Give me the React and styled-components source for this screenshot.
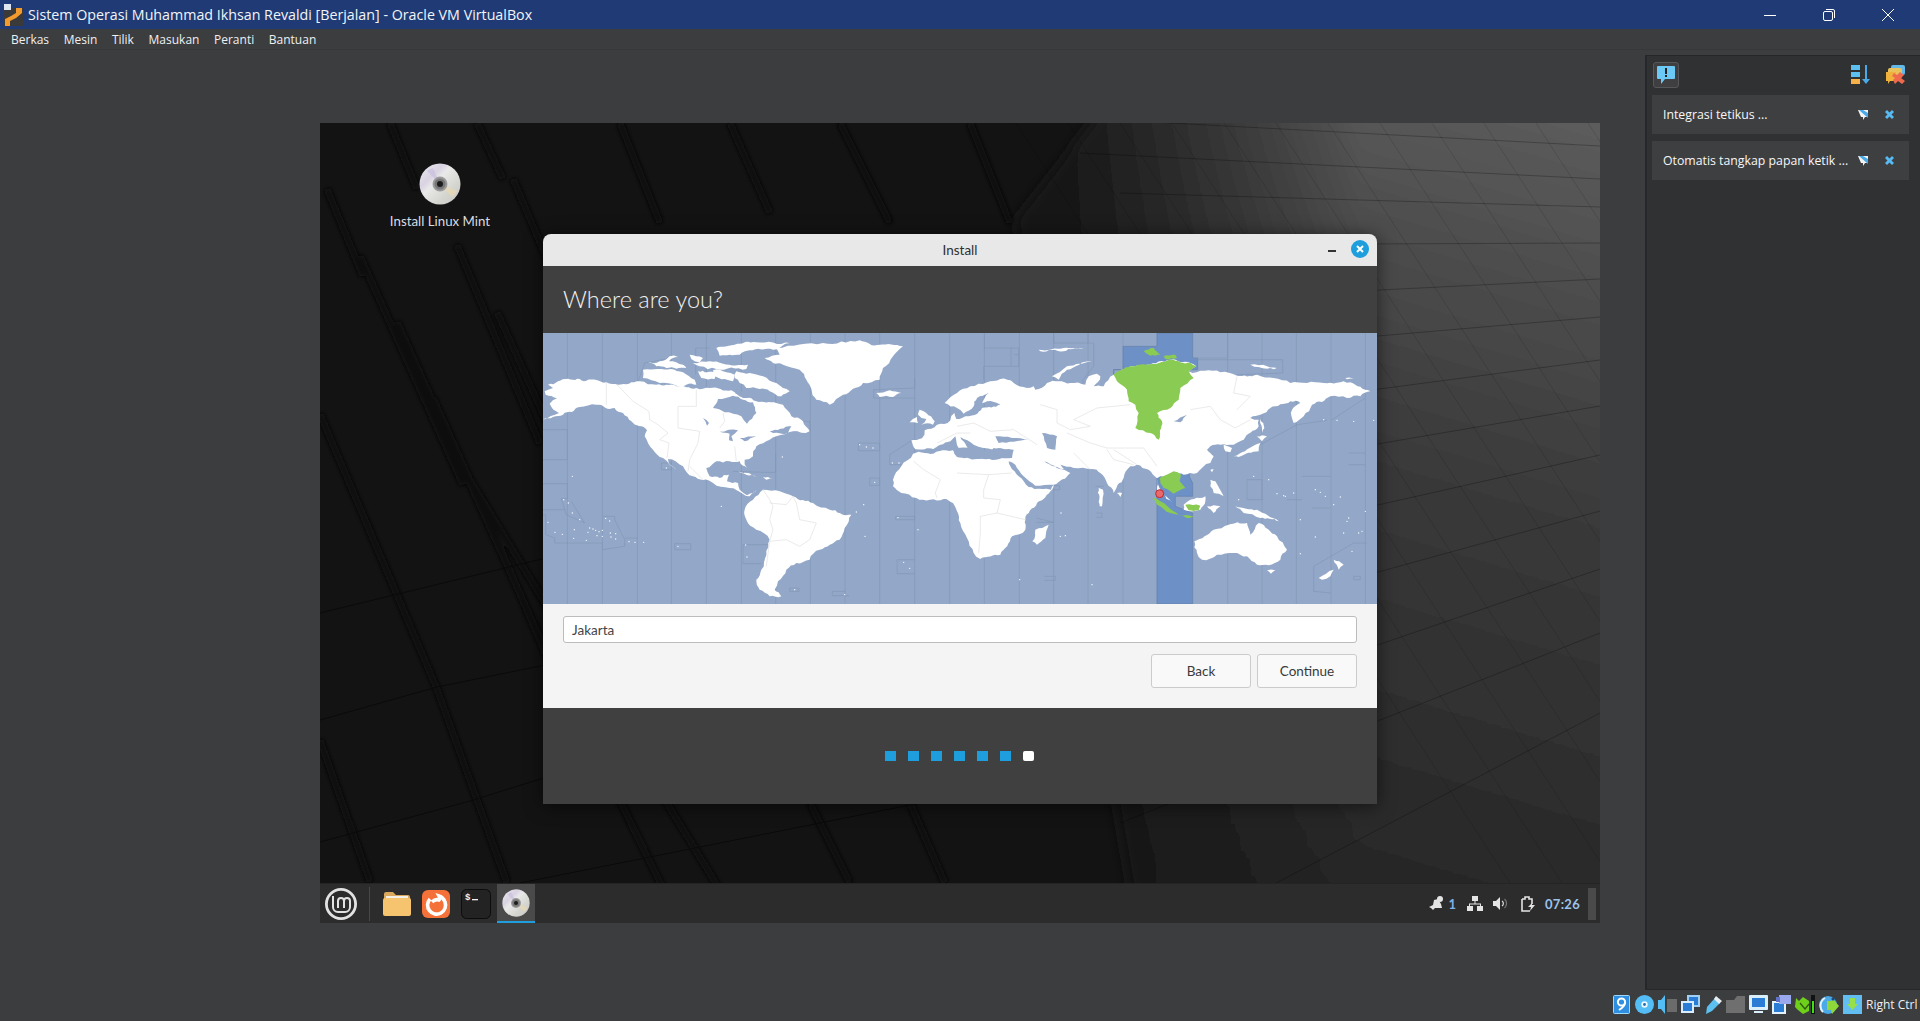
import React from "react";
import styled, { createGlobalStyle } from "styled-components";

const GlobalStyle = createGlobalStyle`
  html, body {
    margin: 0;
    padding: 0;
    background: #3c3d3f;
    overflow: hidden;
  }
  * { box-sizing: border-box; }
`;

const HOST_FONT = `"Open Sans", "Noto Sans", sans-serif`;
const GUEST_FONT = `Lato, "Noto Sans", sans-serif`;

const Window = styled.div`
  width: 1920px;
  height: 1021px;
  display: flex;
  flex-direction: column;
  background: #3c3d3f;
  font-family: ${HOST_FONT};
`;

const TitleBar = styled.header`
  height: 29px;
  flex: none;
  display: flex;
  align-items: center;
  background: #1f3a75;
  color: #f2f4f8;
  padding: 0 3px;
`;

const TitleText = styled.span`
  font-size: 14.25px;
  margin-left: 5px;
  flex: 1;
  white-space: nowrap;
`;

const WinButton = styled.div`
  width: 59px;
  height: 29px;
  display: flex;
  align-items: center;
  justify-content: center;
`;

const MenuBar = styled.nav`
  height: 21px;
  flex: none;
  display: flex;
  align-items: center;
  gap: 14.6px;
  padding: 0 0 0 11px;
  color: #eef0f2;
  font-size: 12px;
  border-bottom: 1px solid #37383a;
`;

const Main = styled.main`
  flex: 1;
  display: flex;
  min-height: 0;
`;

const Stage = styled.div`
  flex: 1;
  padding: 73px 0 0 320px;
`;

const Screen = styled.div`
  width: 1280px;
  height: 800px;
  display: flex;
  flex-direction: column;
  position: relative;
  background: #121212;
  overflow: hidden;
  font-family: ${GUEST_FONT};
`;

const WallpaperArt = styled.svg`
  position: absolute;
  inset: 0;
`;

const Desktop = styled.div`
  flex: 1;
  position: relative;
`;

const DesktopIcon = styled.div`
  position: absolute;
  left: 60px;
  top: 40px;
  width: 120px;
  display: flex;
  flex-direction: column;
  align-items: center;
  gap: 8px;
  color: #d8dde2;
  font-size: 13.3px;
`;

const Dialog = styled.section`
  position: absolute;
  left: 223px;
  top: 111px;
  width: 834px;
  height: 570px;
  display: flex;
  flex-direction: column;
  border-radius: 8px 8px 0 0;
  overflow: hidden;
  box-shadow: 0 2px 18px rgba(0, 0, 0, 0.55);
`;

const DialogTitle = styled.div`
  height: 32px;
  flex: none;
  display: flex;
  align-items: center;
  justify-content: center;
  position: relative;
  background: #e8e8e8;
  color: #303030;
  font-size: 13.5px;
`;

const DialogControls = styled.div`
  position: absolute;
  right: 8px;
  top: 6px;
  display: flex;
  align-items: center;
  gap: 15px;
`;

const MinimizeMark = styled.span`
  width: 8px;
  height: 1.5px;
  margin-top: 4px;
  background: #333;
`;

const CloseCircle = styled.span`
  width: 18px;
  height: 18px;
  border-radius: 50%;
  background: #1f9ede;
  display: flex;
  align-items: center;
  justify-content: center;
`;

const DialogHeader = styled.div`
  height: 67px;
  flex: none;
  display: flex;
  align-items: center;
  padding: 0 20px 2px;
  background: #404040;
  color: #f0f0f0;
  font-size: 23.5px;
  font-weight: 300;
`;

const MapFrame = styled.svg`
  display: block;
  width: 834px;
  height: 271px;
  flex: none;
  background: #93a8c8;
`;

const FormArea = styled.div`
  height: 104px;
  flex: none;
  display: flex;
  flex-direction: column;
  gap: 11px;
  padding: 12px 20px 0;
  background: #f4f4f4;
`;

const CityInput = styled.div`
  height: 27px;
  display: flex;
  align-items: center;
  padding: 0 8px;
  background: #fff;
  border: 1px solid #bcbcbc;
  border-radius: 3px;
  color: #444;
  font-size: 13.5px;
`;

const ButtonRow = styled.div`
  display: flex;
  justify-content: flex-end;
  gap: 6px;
`;

const Button = styled.div`
  width: 100px;
  height: 34px;
  display: flex;
  align-items: center;
  justify-content: center;
  background: #f9f9f9;
  border: 1px solid #cbcbcb;
  border-radius: 3px;
  color: #3a3a3a;
  font-size: 13.5px;
`;

const DialogFooter = styled.div`
  flex: 1;
  display: flex;
  align-items: flex-start;
  justify-content: center;
  gap: 12px;
  padding: 43px 2px 0 0;
  background: #404040;
`;

const StepDot = styled.span`
  width: 11px;
  height: 10px;
  background: ${({ $current }) => ($current ? "#fff" : "#1f9ede")};
  border-radius: ${({ $current }) => ($current ? "2px" : "0")};
`;

const Panel = styled.footer`
  height: 40px;
  flex: none;
  position: relative;
  display: flex;
  align-items: center;
  background: #2c2c2c;
  border-top: 1px solid #242424;
`;

const MenuButton = styled.div`
  width: 50px;
  height: 34px;
  display: flex;
  align-items: center;
  justify-content: center;
  padding-right: 8px;
  border-right: 1px solid #484848;
  margin-right: 13px;
`;

const Launchers = styled.div`
  display: flex;
  align-items: center;
  gap: 11px;
`;

const ActiveApp = styled.div`
  width: 38px;
  height: 39px;
  margin-left: 6px;
  display: flex;
  align-items: center;
  justify-content: center;
  background: #4a4a4a;
  border-bottom: 2px solid #1f9ede;
`;

const Tray = styled.div`
  margin-left: auto;
  height: 100%;
  display: flex;
  align-items: center;
  padding-right: 4px;
  color: #e4e4e4;
`;

const TrayCount = styled.span`
  margin: 0 11px 0 4px;
  color: #7fb2e6;
  font-size: 13px;
  font-weight: 700;
`;

const TrayIcon = styled.span`
  display: flex;
  margin-right: ${({ $gap }) => $gap}px;
`;

const Clock = styled.span`
  color: #9cc3ec;
  font-size: 13px;
  font-weight: 700;
  letter-spacing: 0.3px;
`;

const PanelHandle = styled.span`
  width: 8px;
  height: 32px;
  margin-left: 8px;
  background: #4a4a4a;
`;

const Sidebar = styled.aside`
  width: 275px;
  flex: none;
  margin-top: 5px;
  display: flex;
  flex-direction: column;
  gap: 7px;
  padding: 6px 11px 0 5px;
  background: #303133;
  border: 1px solid #26272a;
  border-left-width: 2px;
  border-right: none;
`;

const SideHeader = styled.div`
  height: 26px;
  display: flex;
  align-items: center;
`;

const ToggleButton = styled.div`
  width: 26px;
  height: 26px;
  margin-left: 1px;
  display: flex;
  align-items: center;
  justify-content: center;
  background: #3f3f41;
  border: 1px solid #56575a;
  border-radius: 3px;
`;

const SideActions = styled.div`
  margin-left: auto;
  margin-right: 3px;
  display: flex;
  align-items: center;
  gap: 15px;
`;

const NoticeRow = styled.div`
  height: 39px;
  display: flex;
  align-items: center;
  padding: 0 15px 0 11px;
  background: #3e3f41;
  color: #f6f7f8;
  font-size: 12.3px;
`;

const NoticeText = styled.span`
  flex: 1;
  white-space: nowrap;
`;

const NoticeIcons = styled.span`
  display: flex;
  align-items: center;
  gap: 17px;
`;

const StatusBar = styled.div`
  height: 31px;
  flex: none;
  display: flex;
  align-items: center;
  justify-content: flex-end;
  gap: 4px;
  padding-bottom: 2px;
  overflow: hidden;
  color: #eef0f2;
  font-size: 12px;
`;

const StatusText = styled.span`
  width: 54px;
  white-space: nowrap;
`;

/* ---------- wallpaper ---------- */

const RIGHT_RAILS = [
  [700, -8, 1280, 23], [760, 30, 1280, 56], [800, 70, 1280, 84], [800, 122, 1280, 120],
  [800, 180, 1280, 156], [800, 235, 1280, 194], [800, 300, 1280, 237], [800, 365, 1280, 283],
  [800, 440, 1280, 332], [800, 520, 1280, 388], [800, 610, 1280, 446], [800, 700, 1280, 510],
  [880, 800, 1280, 590],
];

const DARK_RIDGES = [
  [0, 291, 117, 566, 187, 760], [77, 199, 220, 515, 360, 800], [7, 66, 43, 153],
  [137, 122, 220, 321], [113, 275, 173, 408, 230, 541], [70, 0, 97, 66], [157, 0, 183, 56],
  [193, 56, 230, 143], [177, 189, 230, 306], [150, 357, 420, 800], [0, 617, 50, 759],
  [40, 133, 143, 362], [490, 680, 530, 760], [590, 680, 625, 760], [300, 0, 340, 100],
  [410, 0, 450, 90], [520, 0, 570, 100], [650, 0, 690, 100],
];

const FAINT_RIDGES = [
  [0, 490, 230, 434, 800, 300], [0, 597, 117, 564, 230, 541, 700, 440],
  [0, 719, 150, 678, 230, 653, 700, 560], [200, 760, 900, 620],
];

const pts = (line) => {
  const out = [];
  for (let i = 0; i < line.length; i += 2) out.push(`${line[i]},${line[i + 1]}`);
  return out.join(" ");
};

const Wallpaper = () => {
  const diagonals = [];
  for (let i = -2; i < 10; i++) {
    const x = 800 + i * 52;
    diagonals.push(<line key={i} x1={x} y1={0} x2={x + 520} y2={800} />);
  }
  return (
    <WallpaperArt width="1280" height="800" viewBox="0 0 1280 800" aria-hidden="true">
      <defs>
        <linearGradient id="lit" gradientUnits="userSpaceOnUse" x1="1280" y1="0" x2="1040" y2="800">
          <stop offset="0" stopColor="#5c5c5c" />
          <stop offset="0.45" stopColor="#3a3a3a" />
          <stop offset="1" stopColor="#252525" />
        </linearGradient>
        <linearGradient id="fade" gradientUnits="userSpaceOnUse" x1="720" y1="0" x2="1040" y2="0">
          <stop offset="0" stopColor="#131313" stopOpacity="1" />
          <stop offset="1" stopColor="#131313" stopOpacity="0" />
        </linearGradient>
        <filter id="soft"><feGaussianBlur stdDeviation="2" /></filter>
        <filter id="edge"><feGaussianBlur stdDeviation="7" /></filter>
      </defs>
      <rect width="1280" height="800" fill="#131313" />
      <g filter="url(#edge)">
        <polygon points="788,-20 1320,-20 1320,820 820,820 696,97" fill="url(#lit)" />
        <polygon points="788,-20 1040,-20 1040,820 820,820 696,97" fill="url(#fade)" />
      </g>
      <g stroke="#000" strokeOpacity="0.12" strokeWidth="1" fill="none">
        {diagonals}
      </g>
      <g stroke="#000" strokeOpacity="0.25" strokeWidth="1" fill="none">
        {RIGHT_RAILS.map((r, i) => (
          <line key={i} x1={r[0]} y1={r[1]} x2={r[2]} y2={r[3]} />
        ))}
      </g>
      <g stroke="#090909" strokeWidth="7" fill="none" filter="url(#soft)">
        {DARK_RIDGES.map((r, i) => (
          <polyline key={i} points={pts(r)} />
        ))}
      </g>
      <g stroke="#0b0b0b" strokeWidth="1" fill="none">
        {FAINT_RIDGES.map((r, i) => (
          <polyline key={i} points={pts(r)} />
        ))}
      </g>
    </WallpaperArt>
  );
};

/* ---------- world map, traced in 3x map pixels ---------- */

// breaks long straight edges up so traced coasts don't look like cut paper
const roughen = (points, amount = 5) => {
  let list = points.split(" ").map((p) => p.split(",").map(Number));
  let seed = list.length * 7 + 3;
  const noise = () => {
    seed = (seed * 9301 + 49297) % 233280;
    return seed / 233280 - 0.5;
  };
  for (let pass = 0; pass < 3; pass++) {
    const next = [];
    list.forEach((a, i) => {
      const b = list[(i + 1) % list.length];
      next.push(a);
      const dx = b[0] - a[0];
      const dy = b[1] - a[1];
      const len = Math.hypot(dx, dy);
      if (len > 14) {
        const off = noise() * Math.min(amount * 2, len * 0.3);
        next.push([(a[0] + b[0]) / 2 - (dy / len) * off, (a[1] + b[1]) / 2 + (dx / len) * off]);
      }
    });
    list = next;
  }
  return list.map((p) => `${p[0].toFixed(1)},${p[1].toFixed(1)}`).join(" ");
};

const WEST_LAND = [
  "5,175 30,165 15,155 45,145 75,137 130,143 190,148 225,155 290,145 340,155 400,160 460,165 500,165 565,172 575,178 610,195 640,205 700,210 720,215 745,250 780,265 800,295 750,295 700,310 680,320 640,340 630,370 605,380 612,405 590,385 560,385 520,385 490,405 500,430 530,435 558,425 552,445 585,450 590,470 612,487 632,480 640,470 620,490 600,483 560,465 510,450 450,430 420,400 375,378 400,412 360,375 330,350 305,310 312,292 265,265 240,240 215,225 160,215 110,222 60,245 0,260 48,240 20,212 42,196 8,185",
  "300,110 345,108 420,118 455,140 460,155 400,158 350,150 300,135",
  "315,90 350,85 380,70 405,72 378,85 420,95 430,105 370,105 340,100",
  "440,65 480,75 470,88 445,78",
  "520,45 575,35 640,28 740,30 690,50 620,52 590,65 530,68",
  "450,90 500,85 540,92 615,95 610,108 520,108 470,100",
  "465,115 520,122 515,138 475,135",
  "510,112 550,118 575,125 570,145 545,138 510,130",
  "580,115 620,120 660,130 700,150 720,165 740,175 715,190 680,175 650,168 610,165 590,150 575,135",
  "665,75 710,65 700,45 840,30 950,22 1010,35 1080,40 1050,70 1020,105 1010,140 960,150 900,185 860,215 820,200 790,140 770,110 720,95 690,90",
  "1000,180 1040,172 1075,180 1050,192 1010,192",
  "605,530 630,500 660,470 710,475 750,490 810,510 860,530 925,545 905,585 890,620 830,650 800,680 760,690 730,710 705,745 695,770 715,790 680,790 650,770 640,740 655,710 680,620 640,590 610,560",
  "1130,230 1150,240 1175,265 1170,275 1135,275 1150,258 1125,245",
  "1100,268 1122,252 1125,270",
  "585,415 640,432 610,425",
  "660,433 690,437 670,440",
];

const WEST_SEAS = [
  "510,225 525,198 570,188 600,200 630,208 640,240 612,272 595,250 545,238",
  "575,180 620,165 660,180 660,195 600,195",
  "530,295 585,292 565,310 570,325 558,322 560,302",
  "590,315 640,310 605,325",
  "680,295 745,280 735,300 690,300",
  "480,255 498,270 492,278",
];

const WEST_ZONES = [
  "0,290 73,290 73,380 0,380", "0,452 73,452 73,497 55,497 70,545 125,570 85,505", "0,530 65,530",
  "0,545 8,545 8,605 35,615 35,630 178,630 178,650 245,640 245,620 215,560 215,550 180,550",
  "245,615 283,615", "355,390 385,390 385,410 355,410 355,390", "395,632 443,632 443,650 395,650 395,632",
  "600,635 680,635", "600,635 600,692 655,692", "748,265 800,265 802,295 750,295",
  "992,170 1115,165 1115,135", "992,170 992,195 1115,195", "946,330 1010,330 1010,353 946,353 946,330",
  "980,435 1010,435 1010,457 980,457 980,435", "1058,550 1115,550 1115,560 1058,560 1058,550",
  "1062,680 1115,680", "1062,680 1062,722 1115,722", "740,765 768,765 768,775 740,775 740,765",
  "868,775 906,775", "868,775 868,788 918,788", "1040,365 1110,320", "1040,365 1040,395 1075,395",
  "285,145 305,90 400,72", "458,45 500,45", "458,45 458,125", "698,360 698,418 665,418", "570,415 665,418",
];

const WEST_BORDERS = [
  "190,150 190,215", "222,155 270,205 318,235 320,260 345,275 375,300 350,320 378,330 372,375",
  "405,220 405,285 470,295 465,330 440,380 435,415", "460,170 460,220 405,220",
  "540,240 545,265 530,285", "575,340 580,385", "440,400 480,440",
  "660,470 680,500 690,520 680,560 690,590 680,625 730,620 770,640 800,620 820,570 770,560 760,510 750,490",
  "680,510 730,515 750,490", "680,625 670,700",
];

const WEST_ISLANDS = [
  [62, 500], [76, 510], [88, 540], [110, 560], [15, 568], [36, 598], [58, 604], [94, 590], [92, 616],
  [130, 622], [135, 598], [140, 585], [150, 588], [158, 592], [168, 596], [178, 592], [162, 608], [178, 610],
  [202, 600], [218, 602], [204, 612], [218, 618], [258, 626], [276, 628], [302, 628], [188, 556], [200, 564],
  [88, 430], [535, 520], [718, 372], [962, 515], [940, 537], [966, 610], [1082, 688], [1100, 706], [1125, 590],
  [608, 636], [612, 672], [405, 640], [370, 405], [1065, 554], [755, 770], [905, 785],
  [950, 335], [970, 342], [990, 345], [995, 448], [1048, 390], [1068, 390],
];

const EAST_LAND = [
  "-137,322 -105,316 -97,292 -60,275 -20,262 -8,240 -2,258 35,250 55,245 75,225 130,215 90,205 75,210 95,180 60,195 50,220 20,242 0,225 -37,210 0,180 40,160 90,148 130,138 170,150 210,165 230,160 235,170 270,150 340,150 385,155 395,130 420,122 430,130 410,160 440,160 470,125 520,100 570,95 640,80 700,90 718,100 695,115 790,118 840,128 900,125 950,135 1000,150 1050,150 1100,150 1180,148 1240,175 1210,190 1170,195 1120,190 1065,215 1040,250 1010,270 1005,230 1030,210 1000,205 940,225 880,255 905,260 905,280 860,320 830,335 790,335 760,340 750,350 770,370 760,390 720,420 680,425 650,420 610,430 600,436 575,410 540,395 520,400 500,435 470,480 450,450 430,420 405,408 350,405 310,395 340,420 290,455 285,470 240,510 205,560 205,590 165,610 130,665 70,678 50,660 30,615 10,570 0,535 -12,510 -40,498 -122,495 -167,480 -192,460 -192,440 -167,400 -132,362 -62,356 -10,350 0,372 60,378 150,375 150,350 0,345 -70,349 -125,349",
  "600,436 612,475 650,512 628,497 600,470",
  "275,575 265,615 240,635 226,625 235,590",
  "285,130 330,100 405,85 330,110 305,140",
  "245,50 320,45 380,45 320,55 250,55",
  "880,95 930,100 970,105 930,107",
  "1165,135 1190,137 1170,139",
  "712,625 770,590 815,575 870,570 880,605 905,570 960,610 990,650 970,680 935,697 900,695 870,670 830,660 780,665 735,680 720,660",
  "930,712 955,712 942,722",
  "1085,735 1130,710 1120,730 1095,740",
  "1130,680 1160,695 1145,710",
  "680,515 745,490 745,505 730,530 700,535 680,530",
  "750,520 790,520 770,540",
  "760,440 775,445 800,490 770,480 760,460",
  "835,520 900,530 965,565 910,555 860,540",
  "830,370 895,335 910,330 905,355 845,372",
  "900,310 930,310 915,325",
  "910,258 922,285 915,300",
  "800,335 825,345 820,358 805,355",
  "760,410 770,408 765,418",
  "480,480 495,480 490,492",
  "425,465 438,470 435,520 428,520",
];

const EAST_SEAS = [
  "-122,351 -75,351 -50,335 -20,325 -5,310 5,345 45,365 10,312 50,335 75,345 95,370 110,345 170,350 165,375 60,378 0,370 -12,352 -62,353",
  "115,310 215,320 170,326 125,330",
  "255,300 300,310 295,350 270,345",
  "155,385 175,395 200,430 235,458 290,455 282,470 232,468 215,462 185,430 160,400",
  "262,385 300,405 330,412 290,400",
  "650,265 690,245 670,268",
];

const EAST_ZONES = [
  "82,0 82,50", "82,45 185,45 185,100 80,100 80,140", "162,45 162,100", "172,65 185,65",
  "290,30 410,30 410,100 378,140 378,160", "290,0 290,30", "393,0 393,30",
  "707,75 812,75 812,0", "722,80 977,80 977,120 840,125", "245,458 308,458 308,470 290,470",
  "238,555 290,568 238,568", "262,730 295,730 295,742 262,742", "418,540 435,540 435,553 418,553",
  "415,460 440,460", "870,440 915,440 915,500 870,500 870,440", "1035,430 1122,430", "990,500 1035,500",
  "1065,525 1120,525", "1070,700 1190,630 1230,630", "1070,700 1070,775 1122,780", "1122,262 1225,195",
  "900,340 1020,275 1110,262", "1175,360 1225,360", "1175,395 1225,395", "1190,730 1210,730 1210,740 1190,740 1190,730",
];

const EAST_BORDERS = [
  "-130,385 -100,410 -50,440 -65,480 -60,495", "0,420 95,425 165,420",
  "95,425 80,470 80,495 130,500 120,540 70,550 70,600 65,660", "205,560 120,540",
  "100,295 170,290 240,335", "250,215 300,230 300,270 340,290 400,280 350,260 420,225 520,215",
  "330,300 400,330 450,345 560,345 600,400", "350,360 400,410", "450,350 470,380 530,395",
  "700,230 760,220 790,260 835,285 880,260", "0,280 50,270 100,295", "-60,330 0,300 40,300",
  "840,130 830,180 880,190 840,230", "470,350 540,395",
];

const EAST_ISLANDS = [
  [960, 482], [980, 488], [1010, 480], [1075, 470], [1090, 478], [1105, 490], [1150, 492], [1130, 515], [1175, 555],
  [1225, 535], [1160, 600], [1205, 600], [1215, 595], [1185, 655], [1100, 260], [1140, 262], [1190, 265], [1250, 262],
  [310, 610], [325, 608], [312, 540], [405, 755], [188, 740], [1030, 662], [1075, 612], [935, 440], [890, 430],
  [845, 500], [1030, 560], [985, 490], [1170, 565],
];

const GREEN_LAND = [
  "470,125 520,100 570,95 640,80 700,90 718,100 695,115 710,135 670,165 665,200 640,225 600,240 615,265 605,320 580,300 535,285 545,240 535,215 515,205 510,170 480,145",
  "560,55 590,45 610,65 580,68",
  "620,70 655,65 660,75 625,78",
  "608,435 650,415 672,425 668,445 685,465 650,482 620,465 610,450",
  "585,495 610,505 650,535 665,545 640,540 600,515",
  "665,545 720,552 690,555",
  "685,515 730,518 725,532 695,532",
];

const TZ_X = [73, 178, 283, 385, 490, 595, 698, 802, 906, 1010, 1115, 1220, 1324, 1429, 1532, 1635, 1740, 1842, 2054, 2157, 2260, 2364, 2467];

const LandLayer = ({ shapes, fill, amount }) => (
  <g fill={fill}>
    {shapes.map((p) => (
      <polygon key={p} points={roughen(p, amount)} />
    ))}
  </g>
);

const LineLayer = ({ shapes, stroke }) => (
  <g stroke={stroke} strokeWidth="2" fill="none">
    {shapes.map((p) => (
      <polyline key={p} points={p} />
    ))}
  </g>
);

const Dots = ({ items }) => (
  <g fill="#fff">
    {items.map(([x, y]) => (
      <circle key={`${x}-${y}`} cx={x} cy={y} r="2" />
    ))}
  </g>
);

const WorldMap = () => (
  <MapFrame viewBox="0 0 2502 813" preserveAspectRatio="none" role="img" aria-label="Time zone map">
    <defs>
      <filter id="mapBlur"><feGaussianBlur stdDeviation="0.8" /></filter>
    </defs>
    <g filter="url(#mapBlur)">
      <g stroke="#8296b5" strokeWidth="2" fill="none">
        {TZ_X.map((x) => (
          <line key={x} x1={x} y1="0" x2={x} y2="813" />
        ))}
      </g>
      <g transform="translate(1242 0)">
        <path
          d="M600 0H707V75H722V110H697V430L707 450V490H655V520L707 540V813H600V110H470V125V110H498V40H600Z"
          fill="#6d90c6"
          stroke="#6680a8"
          strokeWidth="2"
        />
      </g>
      <LineLayer shapes={WEST_ZONES} stroke="#8296b5" />
      <LandLayer shapes={WEST_LAND} fill="#fff" />
      <Dots items={WEST_ISLANDS} />
      <LandLayer shapes={WEST_SEAS} fill="#93a8c8" amount={3} />
      <LineLayer shapes={WEST_BORDERS} stroke="#dfe0e0" />
      <g transform="translate(1242 0)">
        <LineLayer shapes={EAST_ZONES} stroke="#8296b5" />
        <LandLayer shapes={EAST_LAND} fill="#fff" />
        <Dots items={EAST_ISLANDS} />
        <LandLayer shapes={EAST_SEAS} fill="#93a8c8" amount={2} />
        <LineLayer shapes={EAST_BORDERS} stroke="#dfe0e0" />
        <LandLayer shapes={GREEN_LAND} fill="#8acb52" amount={3} />
      </g>
    </g>
    <g transform="translate(1242 0)">
      <circle cx="608" cy="482" r="12" fill="#e86a6a" stroke="#c4262e" strokeWidth="3" />
      <rect x="606" y="495" width="3" height="7" fill="#888" />
    </g>
  </MapFrame>
);

/* ---------- icons ---------- */

const Disc = ({ size }) => (
  <svg width={size} height={size} viewBox="0 0 42 42" aria-hidden="true">
    <defs>
      <linearGradient id="discSheen" x1="0" y1="0" x2="1" y2="1">
        <stop offset="0" stopColor="#eee" />
        <stop offset="0.3" stopColor="#d9d2e2" />
        <stop offset="0.42" stopColor="#e9e9e9" />
        <stop offset="0.7" stopColor="#d5d5d0" />
        <stop offset="1" stopColor="#c4c4c4" />
      </linearGradient>
    </defs>
    <circle cx="21" cy="21" r="20.5" fill="url(#discSheen)" />
    <path d="M21 21 L8 8 A18 18 0 0 1 14 5Z" fill="#c9bfe0" opacity="0.7" />
    <path d="M21 21 L38 28 A18 18 0 0 1 33 34Z" fill="#e6d8b4" opacity="0.8" />
    <circle cx="21" cy="21" r="7.5" fill="#9a9a9a" />
    <circle cx="21" cy="21" r="5.5" fill="#777" />
    <circle cx="21" cy="21" r="3" fill="#1c1c1c" />
  </svg>
);

const MintLogo = () => (
  <svg width="34" height="34" viewBox="-17 -17 34 34" fill="none" stroke="#e2e2e2" aria-hidden="true">
    <circle r="14.6" strokeWidth="2.8" />
    <path d="M-8 -8V3a5 5 0 0 0 5 5H4a5 5 0 0 0 5 -5V-3a3 3 0 0 0 -6 0V4M3 -3a3 3 0 0 0 -6 0V4" strokeWidth="2" />
  </svg>
);

const FolderIcon = () => (
  <svg width="28" height="25" viewBox="0 0 28 25" aria-hidden="true">
    <path d="M1 3a2 2 0 0 1 2-2h7l3 3h12a2 2 0 0 1 2 2v4H1Z" fill="#d9a85c" />
    <rect x="3" y="5" width="22" height="3" fill="#f2efe6" />
    <rect y="7" width="28" height="18" rx="2" fill="#f6c46f" />
  </svg>
);

const BrowserIcon = () => (
  <svg width="28" height="28" viewBox="0 0 28 28" aria-hidden="true">
    <rect width="28" height="28" rx="6" fill="#f4713a" />
    <path d="M8 9a9 9 0 1 0 15 3c-1-3-3-5-6-6 1 2 1 3 0 4-3-1-5 0-7 2" fill="none" stroke="#fff" strokeWidth="3.6" />
    <circle cx="14" cy="15" r="2.5" fill="#f4713a" />
  </svg>
);

const TerminalIcon = () => (
  <svg width="30" height="30" viewBox="0 0 30 30" aria-hidden="true">
    <rect x="0.5" y="0.5" width="29" height="29" rx="5" fill="#232323" stroke="#0c0c0c" />
    <text x="4" y="11" fill="#f0f0f0" fontFamily="Liberation Mono, monospace" fontSize="9" fontWeight="700">$</text>
    <rect x="11" y="10" width="6" height="1.3" fill="#f0f0f0" />
  </svg>
);

const BellIcon = () => (
  <svg width="16" height="15" viewBox="0 0 16 15" fill="#e4e4e4" aria-hidden="true">
    <path d="M1 11 5 9 6 4 10 3 13 8 14 12 7 12 5 14 3 12Z" />
    <circle cx="12" cy="3" r="3" />
  </svg>
);

const NetworkIcon = () => (
  <svg width="16" height="15" viewBox="0 0 16 15" fill="#e4e4e4" aria-hidden="true">
    <rect x="5" y="0" width="6" height="5" />
    <rect x="0" y="10" width="6" height="5" />
    <rect x="10" y="10" width="6" height="5" />
    <path d="M7.500 5h1v2.500H14V10h-1V8.500H3V10H2V7.500h5.500Z" />
  </svg>
);

const VolumeIcon = () => (
  <svg width="16" height="15" viewBox="0 0 16 15" aria-hidden="true">
    <path d="M0 5h3l4-4v13l-4-4H0Z" fill="#e4e4e4" />
    <path d="M9 5a3 3 0 0 1 0 5" stroke="#e4e4e4" strokeWidth="1.2" fill="none" />
    <path d="M11.500 3a6 6 0 0 1 0 9" stroke="#777" strokeWidth="1.2" fill="none" />
  </svg>
);

const BatteryIcon = () => (
  <svg width="15" height="16" viewBox="0 0 15 16" aria-hidden="true">
    <path d="M1 3h3V1h4v2h3v5M9 15H1V3" fill="none" stroke="#e4e4e4" strokeWidth="1.6" />
    <path d="M11 7 7 11h3l-1 4 5-6h-3Z" fill="#e4e4e4" />
  </svg>
);

const AlertBubble = () => (
  <svg width="20" height="20" viewBox="0 0 20 20" aria-hidden="true">
    <path d="M2 1h16a1 1 0 0 1 1 1v11a1 1 0 0 1-1 1H9l-4 5v-5H2a1 1 0 0 1-1-1V2a1 1 0 0 1 1-1Z" fill="#6cc9f5" />
    <rect x="9" y="3" width="2" height="6" fill="#222" />
    <rect x="9" y="10" width="2" height="2" fill="#222" />
  </svg>
);

const SortIcon = () => (
  <svg width="20" height="20" viewBox="0 0 20 20" aria-hidden="true">
    <rect width="9" height="5" fill="#5cc0f0" />
    <rect y="7" width="9" height="5" fill="#5cc0f0" />
    <rect y="14" width="9" height="5" fill="#f5b04a" />
    <path d="M14 0h2v14h3l-4 5-4-5h3Z" fill="#4aa9e6" />
  </svg>
);

const CloseAllIcon = () => (
  <svg width="20" height="20" viewBox="0 0 20 20" aria-hidden="true">
    <rect x="5" y="0" width="14" height="10" rx="2" fill="#63b8ea" />
    <rect x="2" y="3" width="14" height="10" rx="2" fill="#e9c25c" />
    <path d="M0 7h10v9H4l-2 3v-3H0Z" fill="#f0b23a" />
    <path d="M8 8l3 2 3-3 4 3-3 3 4 3-3 3-4-3-3 3-2-4 2-2-3-2Z" fill="#ef6a4c" />
  </svg>
);

const RowPin = () => (
  <svg width="10" height="10" viewBox="0 0 10 10" aria-hidden="true">
    <path d="M0 0h10v7H7l-2 3V7H3Z" fill="#f4f4f4" />
    <path d="M1 0l9 8V3L5 0Z" fill="#4aa9e6" />
  </svg>
);

const RowClose = () => (
  <svg width="9" height="9" viewBox="0 0 9 9" aria-hidden="true">
    <path d="M0 2 2 0 4.500 2.500 7 0 9 2 6.500 4.500 9 7 7 9 4.500 6.500 2 9 0 7 2.500 4.500Z" fill="#58baf2" />
  </svg>
);

const AppIcon = () => (
  <svg width="20" height="22" viewBox="0 0 20 22" aria-hidden="true">
    <rect y="4" width="20" height="18" fill="#3a3a3a" />
    <rect x="1" y="0" width="7" height="6" fill="#dfe6ef" />
    <path d="M2 22V15L8 12 13 9 13 4H19V9L13 14 7 17V22Z" fill="#f29a2e" />
  </svg>
);

/* status bar glyphs */
const StatusHdd = () => (
  <svg width="18" height="19" viewBox="0 0 18 19" aria-hidden="true">
    <rect x="0.500" y="0.500" width="16" height="18" rx="1" fill="#2e8fe0" stroke="#9fd8fb" />
    <circle cx="8.500" cy="7" r="3.600" fill="none" stroke="#fff" strokeWidth="2" />
    <path d="M12 8c0 3-3 5-6 7" stroke="#fff" strokeWidth="2" fill="none" />
  </svg>
);
const StatusCd = () => (
  <svg width="19" height="19" viewBox="0 0 19 19" aria-hidden="true">
    <circle cx="9.500" cy="9.500" r="9.500" fill="#55bdf6" />
    <circle cx="9.500" cy="9.500" r="3.200" fill="#e8f6fe" />
    <circle cx="9.500" cy="9.500" r="1.400" fill="#1f6fb0" />
  </svg>
);
const StatusAudio = () => (
  <svg width="19" height="19" viewBox="0 0 19 19" aria-hidden="true">
    <rect x="9" y="4" width="10" height="13" fill="#6b6b6b" />
    <path d="M0 5h3l4-5v19l-4-5H0Z" fill="#55bdf6" />
  </svg>
);
const StatusNet = () => (
  <svg width="19" height="19" viewBox="0 0 19 19" aria-hidden="true">
    <rect x="6" y="0" width="13" height="12" fill="#9fd0f5" />
    <rect x="8" y="2" width="9" height="8" fill="#2b7cd4" />
    <rect y="6" width="13" height="12" fill="#d8eefc" />
    <rect x="2" y="8" width="9" height="8" fill="#2b7cd4" />
  </svg>
);
const StatusUsb = () => (
  <svg width="18" height="18" viewBox="0 0 18 18" aria-hidden="true">
    <path d="M11 2 16 7 8 15 2 18 3 11Z" fill="#5cc0f0" />
    <path d="M12 0 18 5 15 8 10 3Z" fill="#e9eef2" />
  </svg>
);
const StatusFolder = () => (
  <svg width="19" height="17" viewBox="0 0 19 17" aria-hidden="true">
    <path d="M0 4h8l3-4h8v17H0Z" fill="#6f6f6f" />
  </svg>
);
const StatusDisplay = () => (
  <svg width="19" height="19" viewBox="0 0 19 19" aria-hidden="true">
    <rect width="19" height="15" rx="1" fill="#d9effc" />
    <rect x="3" y="3" width="13" height="9" fill="#2b7cd4" />
    <rect x="5" y="16" width="9" height="2" fill="#d9effc" />
  </svg>
);
const StatusCapture = () => (
  <svg width="19" height="19" viewBox="0 0 19 19" aria-hidden="true">
    <rect y="6" width="14" height="13" fill="#e4f2fc" />
    <rect x="2" y="8" width="10" height="9" fill="#2b7cd4" />
    <rect x="7" y="0" width="12" height="9" fill="#9aa8ee" />
    <rect x="4" y="2" width="4" height="5" fill="#5f72c8" />
  </svg>
);
const StatusCpu = () => (
  <svg width="20" height="19" viewBox="0 0 20 19" aria-hidden="true">
    <path d="M1 3 4 6 8 2 14 6V16L8 19 3 15 0 12Z" fill="#6fd01c" />
    <path d="M5 8 10 14 14 9" stroke="#2e5a10" strokeWidth="1.300" fill="none" />
    <rect x="16" y="0" width="4" height="19" fill="#111" />
    <rect x="17" y="6" width="2" height="12" fill="#3ee010" />
  </svg>
);
const StatusMouse = () => (
  <svg width="20" height="19" viewBox="0 0 20 19" aria-hidden="true">
    <circle cx="9" cy="10" r="9" fill="#4aa9e6" />
    <path d="M6 3a9 9 0 0 0-2 14" fill="none" stroke="#dff2fe" strokeWidth="2" />
    <path d="M8 6h4l1-3 7 8-7 8-1-4H8Z" fill="#8fd83a" />
    <circle cx="14" cy="4" r="1.600" fill="#174a7c" />
  </svg>
);
const StatusKeyboard = () => (
  <svg width="19" height="19" viewBox="0 0 19 19" aria-hidden="true">
    <rect width="19" height="19" fill="#62bdf1" />
    <path d="M7 3h5v6h3l-5.500 6L4 9h3Z" fill="#97e04a" />
  </svg>
);

const MENU_ITEMS = ["Berkas", "Mesin", "Tilik", "Masukan", "Peranti", "Bantuan"];
const NOTICES = ["Integrasi tetikus ...", "Otomatis tangkap papan ketik ..."];
const STEPS = [false, false, false, false, false, false, true];
const StatusGlyphs = [StatusHdd, StatusCd, StatusAudio, StatusNet, StatusUsb, StatusFolder, StatusDisplay, StatusCapture, StatusCpu, StatusMouse, StatusKeyboard];

const App = () => (
  <Window>
    <GlobalStyle />
    <TitleBar>
      <AppIcon />
      <TitleText>Sistem Operasi Muhammad Ikhsan Revaldi [Berjalan] - Oracle VM VirtualBox</TitleText>
      <WinButton>
        <svg width="12" height="12" viewBox="0 0 12 12" stroke="#fff" aria-hidden="true"><path d="M0 6.500h12" /></svg>
      </WinButton>
      <WinButton>
        <svg width="12" height="12" viewBox="0 0 12 12" fill="none" stroke="#fff" aria-hidden="true">
          <rect x="0.500" y="2.500" width="9" height="9" rx="1.500" />
          <path d="M3 0.500h7a1.500 1.500 0 0 1 1.500 1.500v7" />
        </svg>
      </WinButton>
      <WinButton>
        <svg width="12" height="12" viewBox="0 0 12 12" stroke="#fff" aria-hidden="true"><path d="M0 0 12 12M12 0 0 12" /></svg>
      </WinButton>
    </TitleBar>
    <MenuBar>
      {MENU_ITEMS.map((item) => (
        <span key={item}>{item}</span>
      ))}
    </MenuBar>
    <Main>
      <Stage>
        <Screen>
          <Wallpaper />
          <Desktop>
            <DesktopIcon>
              <Disc size={42} />
              <span>Install Linux Mint</span>
            </DesktopIcon>
            <Dialog>
              <DialogTitle>
                Install
                <DialogControls>
                  <MinimizeMark />
                  <CloseCircle>
                    <svg width="8" height="8" viewBox="0 0 8 8" stroke="#fff" strokeWidth="2" aria-hidden="true"><path d="M1 1 7 7M7 1 1 7" /></svg>
                  </CloseCircle>
                </DialogControls>
              </DialogTitle>
              <DialogHeader>Where are you?</DialogHeader>
              <WorldMap />
              <FormArea>
                <CityInput>Jakarta</CityInput>
                <ButtonRow>
                  <Button>Back</Button>
                  <Button>Continue</Button>
                </ButtonRow>
              </FormArea>
              <DialogFooter>
                {STEPS.map((current, i) => (
                  <StepDot key={i} $current={current} />
                ))}
              </DialogFooter>
            </Dialog>
          </Desktop>
          <Panel>
            <MenuButton><MintLogo /></MenuButton>
            <Launchers>
              <FolderIcon />
              <BrowserIcon />
              <TerminalIcon />
            </Launchers>
            <ActiveApp><Disc size={28} /></ActiveApp>
            <Tray>
              <BellIcon />
              <TrayCount>1</TrayCount>
              <TrayIcon $gap={10}><NetworkIcon /></TrayIcon>
              <TrayIcon $gap={12}><VolumeIcon /></TrayIcon>
              <TrayIcon $gap={9}><BatteryIcon /></TrayIcon>
              <Clock>07:26</Clock>
              <PanelHandle />
            </Tray>
          </Panel>
        </Screen>
      </Stage>
      <Sidebar>
        <SideHeader>
          <ToggleButton><AlertBubble /></ToggleButton>
          <SideActions>
            <SortIcon />
            <CloseAllIcon />
          </SideActions>
        </SideHeader>
        {NOTICES.map((notice) => (
          <NoticeRow key={notice}>
            <NoticeText>{notice}</NoticeText>
            <NoticeIcons>
              <RowPin />
              <RowClose />
            </NoticeIcons>
          </NoticeRow>
        ))}
      </Sidebar>
    </Main>
    <StatusBar>
      {StatusGlyphs.map((Glyph, i) => (
        <Glyph key={i} />
      ))}
      <StatusText>Right Ctrl</StatusText>
    </StatusBar>
  </Window>
);

export default App;
